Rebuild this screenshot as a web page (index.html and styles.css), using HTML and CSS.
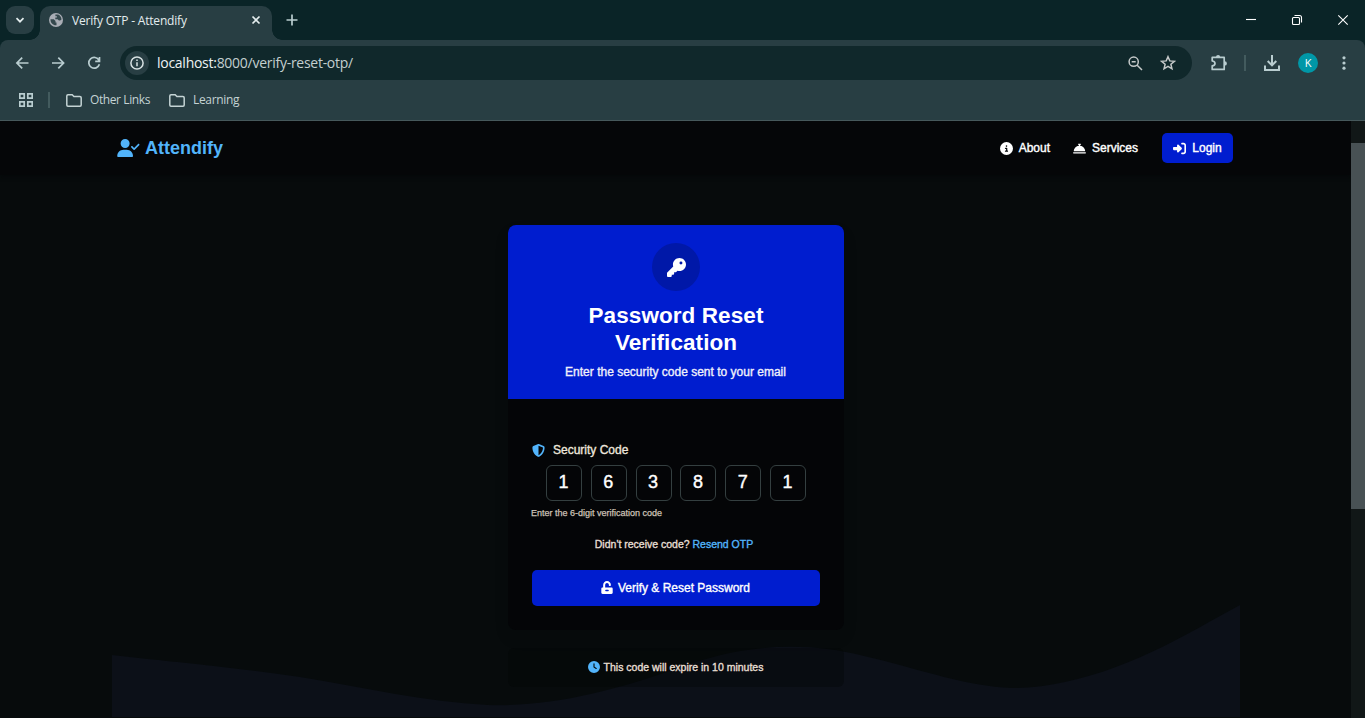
FILE: index.html
```html
<!DOCTYPE html>
<html lang="en">
<head>
<meta charset="utf-8">
<title>Verify OTP - Attendify</title>
<link rel="stylesheet" href="styles.css">
</head>
<body>
<header class="browser">
  <div class="tabstrip">
    <div class="tab-search"><svg width="10" height="10" viewBox="0 0 10 10" class="line bright"><path d="M1.500 3.200 5 6.700l3.500-3.500"/></svg></div>
    <div class="tab">
      <svg class="globe" width="14" height="14" viewBox="0 0 14 14"><circle cx="7" cy="7" r="7" fill="#a9adb5"/><path d="M1.500 6.200h3.300l1.700 1.700v1.600h1v2.700C4.300 12.600 1.300 10 1.500 6.200zM6.400 1.600h2.700c2 .9 3.300 2.700 3.400 4.900-.7 1-1.600 1.300-2.600 1L8.600 6.200H6.300V4.500h1.600V3.200H6.400z" fill="#34484d"/></svg>
      <span class="tab-title">Verify OTP - Attendify</span>
      <svg class="line bright tab-close" width="10" height="10" viewBox="0 0 10 10"><path d="M1.500 1.500l7 7M8.500 1.500l-7 7"/></svg>
    </div>
    <svg class="line new-tab" width="12" height="12" viewBox="0 0 12 12"><path d="M6 .5v11M.5 6h11"/></svg>
    <div class="window-controls">
      <svg width="46" height="40" viewBox="0 0 46 40"><path d="M18 19.500h10"/></svg>
      <svg width="46" height="40" viewBox="0 0 46 40"><rect x="18.500" y="17.500" width="7" height="7" rx="1"/><path d="M20.500 15.500h5a2 2 0 0 1 2 2v5"/></svg>
      <svg width="46" height="40" viewBox="0 0 46 40"><path d="M18.300 15.300l9.400 9.400M27.700 15.300l-9.400 9.400"/></svg>
    </div>
  </div>
  <div class="toolbar-back"><div class="toolbar">
    <div class="nav-buttons">
      <svg class="line" width="14" height="14" viewBox="0 0 14 14"><path d="M13.500 7H2M7.200 1.700 1.900 7l5.300 5.300"/></svg>
      <svg class="line" width="14" height="14" viewBox="0 0 14 14"><path d="M1 7h11.500M7.300 1.700 12.600 7l-5.300 5.300"/></svg>
      <svg class="line" width="14" height="14" viewBox="0 0 14 14"><path d="M12 4.300A5.400 5.400 0 1 0 12.400 8.300M12.500 1v4.300H8.200"/></svg>
    </div>
    <div class="omnibox">
      <span class="site-info"><svg width="14" height="14" viewBox="0 0 14 14"><circle cx="7" cy="7" r="6.100"/><path d="M7 6.300v4M7 3.500v1.400"/></svg></span>
      <span class="url"><b>localhost:</b>8000/verify-reset-otp/</span>
      <svg class="line omni-zoom" width="15" height="15" viewBox="0 0 15 15"><circle cx="5.700" cy="5.700" r="4.600"/><path d="M9.200 9.200l4.800 4.800M3.700 5.700h4"/></svg>
      <svg class="line omni-star" width="16" height="16" viewBox="0 0 16 16"><path d="M8 1.700l1.800 4.200 4.600.4-3.500 3 1.050 4.500L8 11.400l-3.950 2.400L5.100 9.300l-3.500-3 4.600-.4z"/></svg>
    </div>
    <div class="toolbar-actions">
      <svg width="18" height="18" viewBox="0 0 18 18" class="line ext"><path d="M2.200 3.400h12v12h-12v-3.600c2-.2 2.800-1 2.800-2.400S4.200 7.200 2.200 7z" stroke-linejoin="round"/><path class="solid" d="M6 3a2.100 2.100 0 0 1 4.200 0zM14.700 7.200a2.200 2.200 0 0 1 0 4.400z"/></svg>
      <i class="divider"></i>
      <svg width="16" height="16" viewBox="0 0 16 16" class="line download"><path d="M8 0v10M3.700 6 8 10.300 12.300 6M1 10.500V15h14v-4.500"/></svg>
      <span class="avatar">K</span>
      <svg width="4" height="14" viewBox="0 0 4 14" class="menu"><circle cx="2" cy="1.800" r="1.600"/><circle cx="2" cy="7" r="1.600"/><circle cx="2" cy="12.200" r="1.600"/></svg>
    </div>
  </div></div>
  <div class="bookmarks">
    <svg width="14" height="14" viewBox="0 0 14 14" class="line apps"><path d="M.8.8h4.400v4.400H.8zM8.800.8h4.400v4.400H8.800zM.8 8.800h4.400v4.400H.8zM8.800 8.800h4.400v4.400H8.800z"/></svg>
    <i class="divider"></i>
    <span class="bookmark"><svg width="16" height="13" viewBox="0 0 16 13" class="line folder"><path d="M.8 2Q.8.800 2 .8h4.200l1.700 1.700h6Q15.200 2.500 15.200 3.700V11Q15.200 12.200 14 12.200H2Q.8 12.200.8 11z"/></svg><span class="bm-other">Other Links</span></span>
    <span class="bookmark"><svg width="16" height="13" viewBox="0 0 16 13" class="line folder"><path d="M.8 2Q.8.800 2 .8h4.200l1.700 1.700h6Q15.200 2.500 15.200 3.700V11Q15.200 12.200 14 12.200H2Q.8 12.200.8 11z"/></svg><span class="bm-learning">Learning</span></span>
  </div>
</header>
<div class="viewport">
  <div class="page">
    <nav class="navbar">
      <a class="brand"><svg width="23" height="18" viewBox="0 0 640 512"><path d="M96 128a128 128 0 1 1 256 0A128 128 0 1 1 96 128zM0 482.300C0 383.800 79.800 304 178.300 304h91.400C368.200 304 448 383.800 448 482.300c0 16.400-13.300 29.700-29.700 29.700H29.700C13.300 512 0 498.700 0 482.300zM625 177L497 305c-9.400 9.400-24.600 9.400-33.900 0l-64-64c-9.400-9.400-9.400-24.600 0-33.900s24.600-9.400 33.900 0l47 47L591 143c9.400-9.400 24.600-9.400 33.900 0s9.400 24.600 0 33.900z"/></svg><span>Attendify</span></a>
      <a class="nav-link about"><svg width="13" height="13" viewBox="0 0 512 512"><path d="M256 512A256 256 0 1 0 256 0a256 256 0 1 0 0 512zM216 336h24V272H216c-13.300 0-24-10.700-24-24s10.700-24 24-24h48c13.300 0 24 10.700 24 24v88h8c13.300 0 24 10.700 24 24s-10.700 24-24 24H216c-13.300 0-24-10.700-24-24s10.700-24 24-24zm40-208a32 32 0 1 1 0 64 32 32 0 1 1 0-64z"/></svg><span>About</span></a>
      <a class="nav-link services"><svg width="13" height="13" viewBox="0 0 512 512"><path d="M216 64c-13.300 0-24 10.700-24 24s10.700 24 24 24h16v33.300C119.600 157.200 32 252.400 32 368H480c0-115.600-87.600-210.800-200-222.700V112h16c13.300 0 24-10.700 24-24s-10.700-24-24-24H216zM24 400c-13.300 0-24 10.700-24 24s10.700 24 24 24H488c13.300 0 24-10.700 24-24s-10.700-24-24-24H24z"/></svg><span>Services</span></a>
      <a class="login"><svg width="13" height="13" viewBox="0 0 512 512"><path d="M217.900 105.900L340.700 228.700c7.200 7.200 11.300 17.100 11.300 27.300s-4.100 20.100-11.300 27.300L217.900 406.100c-6.400 6.400-15 9.900-24 9.900c-18.700 0-33.900-15.200-33.900-33.900V320H32c-17.700 0-32-14.300-32-32v-64c0-17.700 14.300-32 32-32h128v-62.100c0-18.700 15.200-33.900 33.900-33.900c9 0 17.600 3.600 24 9.900zM352 416h64c17.700 0 32-14.300 32-32V128c0-17.700-14.300-32-32-32h-64c-17.700 0-32-14.300-32-32s14.300-32 32-32h64c53 0 96 43 96 96v256c0 53-43 96-96 96h-64c-17.700 0-32-14.300-32-32s14.300-32 32-32z"/></svg><span>Login</span></a>
    </nav>
    <svg class="wave" width="1128" height="112" viewBox="112 605 1128 112"><path d="M112 655L143 658.600C175 662 238 668 300 677C363 687 425 702 488 705C550 707 613 691 676 669C739 645 801 640 864 656C927 671 965 686 1012 688C1080 688 1150 656 1209 622L1240 605V717H112Z"/></svg>
    <main class="content">
      <section class="card">
        <header class="card-header">
          <span class="key"><svg width="19" height="19" viewBox="0 0 512 512"><path d="M336 352c97.200 0 176-78.800 176-176S433.200 0 336 0S160 78.800 160 176c0 18.700 2.900 36.800 8.300 53.700L7 391c-4.500 4.500-7 10.600-7 17v80c0 13.300 10.700 24 24 24h80c13.300 0 24-10.700 24-24V448h40c13.300 0 24-10.700 24-24V384h40c6.400 0 12.500-2.500 17-7l33.300-33.300c16.900 5.400 35 8.300 53.700 8.300zM376 96a40 40 0 1 1 0 80 40 40 0 1 1 0-80z"/></svg></span>
          <h1>Password Reset<br>Verification</h1>
          <p>Enter the security code sent to your email</p>
        </header>
        <div class="card-body">
          <label class="code-label"><svg width="13" height="13" viewBox="0 0 512 512"><path d="M256 0c4.600 0 9.200 1 13.400 2.900L457.700 82.800c22 9.300 38.400 31 38.300 57.200c-.5 99.200-41.300 280.700-213.600 363.200c-16.700 8-36.100 8-52.800 0C57.300 420.700 16.500 239.200 16 140c-.1-26.200 16.300-47.900 38.300-57.200L242.700 2.900C246.800 1 251.400 0 256 0zm0 66.800V444.800C394 378 431.100 230.100 432 141.400L256 66.800z"/></svg><span>Security Code</span></label>
          <div class="digits"><span>1</span><span>6</span><span>3</span><span>8</span><span>7</span><span>1</span></div>
          <p class="hint"><span>Enter the 6-digit verification code</span></p>
          <p class="resend"><span>Didn't receive code? <a>Resend OTP</a></span></p>
          <button class="submit"><svg width="12" height="13" viewBox="0 0 448 512"><path fill-rule="evenodd" d="M400 256H152V152.900c0-39.600 31.700-72.500 71.300-72.900 40-.4 72.700 32.100 72.700 72v16c0 13.300 10.700 24 24 24h32c13.300 0 24-10.700 24-24v-16C376 68 307.500-.3 223.500 0 139.500.3 72 69.500 72 153.500V256H48c-26.500 0-48 21.500-48 48v160c0 26.500 21.500 48 48 48h352c26.500 0 48-21.500 48-48V304c0-26.500-21.500-48-48-48zM184 344h80a32 32 0 0 1 0 64h-80a32 32 0 0 1 0-64z"/></svg><span>Verify &amp; Reset Password</span></button>
        </div>
      </section>
      <div class="expiry"><svg width="12" height="12" viewBox="0 0 512 512"><path d="M256 0a256 256 0 1 1 0 512A256 256 0 1 1 256 0zM232 120V256c0 8 4 15.500 10.700 20l96 64c11 7.400 25.900 4.400 33.300-6.700s4.400-25.900-6.700-33.300L280 243.200V120c0-13.300-10.700-24-24-24s-24 10.700-24 24z"/></svg><span>This code will expire in 10 minutes</span></div>
    </main>
  </div>
  <div class="scrollbar"><div class="thumb"></div></div>
</div>
</body>
</html>
```
FILE: styles.css
```css
* { box-sizing: border-box; }
body { margin: 0; width: 1365px; height: 718px; overflow: hidden; background: #070b0c; font-family: "Liberation Sans", Arial, sans-serif; color: #fff; }
svg { display: block; flex: none; }
p, h1 { margin: 0; }
span { white-space: nowrap; }

/* Browser frame */
.browser { height: 121px; background: #283e43; border-bottom: 1px solid #46585b; font-family: "Open Sans", "Noto Sans", sans-serif; }
.line { fill: none; stroke: #b9cdd0; stroke-width: 1.7; }
.line.bright { stroke: #e4edee; }
.tabstrip { height: 40px; display: flex; align-items: center; background: #0a2427; padding-left: 6px; }
.tab-search { width: 28px; height: 28px; border-radius: 9px; background: #283e43; display: grid; place-items: center; }
.tab { position: relative; width: 232px; height: 34px; margin: 6px 0 0 6px; padding: 0 11px 5px 9px; border-radius: 10px 10px 0 0; background: #283e43; display: flex; align-items: center; }
.tab::before, .tab::after { content: ""; position: absolute; bottom: 0; width: 10px; height: 10px; }
.tab::before { left: -10px; background: radial-gradient(circle at 0 0, transparent 9.5px, #283e43 10px); }
.tab::after { right: -10px; background: radial-gradient(circle at 100% 0, transparent 9.5px, #283e43 10px); }
.tab-title { margin-left: 9px; font-size: 12px; letter-spacing: -0.19px; color: #e4edee; }
.tab-close { margin-left: auto; }
.globe { margin-top: -1px; }
.tab-close { margin-top: -1px; }
.new-tab { margin-left: 14px; }
.window-controls { display: flex; margin-left: auto; margin-right: -1px; }
.window-controls svg { fill: none; stroke: #fff; stroke-width: 1.1; }
.toolbar-back { background: #0a2427; }
.toolbar { height: 46px; display: flex; align-items: center; padding-left: 15px; border-radius: 8px 8px 0 0; background: #283e43; }
.nav-buttons { display: flex; gap: 22px; }
.omnibox { width: 1072px; height: 34px; margin-left: 19px; padding: 0 16px 0 5px; border-radius: 17px; background: #10282b; display: flex; align-items: center; }
.site-info { width: 24px; height: 24px; border-radius: 50%; background: #283e43; display: grid; place-items: center; }
.site-info svg { fill: none; stroke: #d8e2e3; stroke-width: 1.5; }
.url { margin-left: 8px; padding-bottom: 2px; font-size: 14px; letter-spacing: -0.27px; color: #c3cfcf; }
.url b { font-weight: 400; color: #edf3f3; }
.omni-zoom, .omni-star { stroke: #c5c9c9; stroke-width: 1.5; }
.omni-zoom { margin-left: auto; }
.omni-star { margin-left: 17px; }
.toolbar-actions { display: flex; align-items: center; margin-left: 18px; }
.solid { fill: #b9cdd0; stroke: none; }
.divider { width: 2px; height: 16px; background: #435b5e; }
.toolbar-actions .divider { margin-left: 16px; }
.download { margin-left: 18px; stroke-width: 2; }
.avatar { width: 20px; height: 20px; margin-left: 18px; border-radius: 50%; background: #0097a7; display: grid; place-items: center; font-size: 11px; line-height: 20px; }
.menu { margin-left: 24px; fill: #b9cdd0; }
.bookmarks { height: 34px; display: flex; align-items: center; padding: 0 0 6px 19px; }
.bookmarks .divider { margin: 0 16px 0 15px; }
.bookmark { display: flex; align-items: center; gap: 8px; margin-right: 19px; font-size: 12px; color: #c4d3d4; }
.bookmark span { padding-bottom: 1px; }
.folder { stroke: #c4d3d4; stroke-width: 1.5; }
.bm-other { letter-spacing: -0.4px; }
.bm-learning { letter-spacing: -0.35px; }

/* Page */
.viewport { height: 597px; display: flex; }
.page { position: relative; width: 1351px; overflow: hidden; }
.navbar { height: 54px; padding: 0 118px 0 117px; display: flex; align-items: center; background: #050608; box-shadow: 0 1px 4px #050709; }
.navbar svg, .card-header svg, .submit svg { fill: currentColor; }
.brand { display: flex; align-items: center; gap: 5px; margin-right: auto; color: #52b4fb; font-size: 18px; font-weight: 700; }
.nav-link, .login { display: flex; align-items: center; gap: 6px; font-size: 12px; -webkit-text-stroke: 0.4px currentColor; }
.nav-link { padding-bottom: 1px; margin-right: 23px; }
.services { margin-right: 24px; }
.nav-link svg, .login svg { margin-top: 1px; }
.login { width: 71px; height: 30px; justify-content: center; border-radius: 5px; background: #001dcf; }
.wave { position: absolute; left: 112px; bottom: 1px; fill: #0c1018; }
.content { position: relative; width: 336px; margin: 50px 0 0 508px; }
.card { height: 405px; border-radius: 8px; background: #040507; overflow: hidden; box-shadow: 0 8px 16px rgba(0, 0, 0, .08); }
.card-header { height: 174px; padding-top: 18px; background: #001dcf; text-align: center; }
.key { width: 48px; height: 48px; margin: 0 auto; border-radius: 50%; background: #0018a8; display: grid; place-items: center; }
h1 { margin-top: 11px; font-size: 22.5px; line-height: 27px; letter-spacing: 0.08px; }
.card-header p { margin-top: 7px; font-size: 12px; line-height: 18px; color: #f0f0fb; padding-right: 1px; -webkit-text-stroke: 0.35px currentColor; }
.card-body { padding: 42px 24px 24px; }
.code-label { display: flex; align-items: center; gap: 8px; height: 18px; font-size: 12px; color: #ede6dc; -webkit-text-stroke: 0.35px currentColor; }
.code-label svg, .expiry svg { fill: #52b4fb; }
.digits { display: flex; justify-content: space-between; width: 260px; margin: 6px 0 0 14px; }
.digits span { width: 36px; height: 36px; padding-right: 1px; border: 1px solid #343f40; border-radius: 6px; font-size: 18px; line-height: 33px; text-align: center; -webkit-text-stroke: 0.4px currentColor; }
.hint { margin: 5px 0 0 -1px; font-size: 9px; line-height: 14px; color: #cdc2b6; -webkit-text-stroke: 0.25px currentColor; }
.resend { margin-top: 15px; padding-right: 4px; font-size: 10.5px; line-height: 18px; text-align: center; color: #e6ded2; -webkit-text-stroke: 0.35px currentColor; }
.resend a { color: #52b4fb; }
.submit { width: 288px; height: 36px; margin-top: 17px; padding: 0 1px 1px 0; border: 0; border-radius: 5px; background: #001dcf; color: #fff; display: flex; justify-content: center; align-items: center; gap: 5px; font: 12px "Liberation Sans", Arial, sans-serif; -webkit-text-stroke: 0.35px currentColor; }
.expiry { height: 39px; margin-top: 18px; padding: 0 1px 1px 0; border-radius: 6px; background: rgba(4, 5, 7, .35); display: flex; justify-content: center; align-items: center; gap: 4px; font-size: 10.5px; color: #e6ded2; -webkit-text-stroke: 0.35px currentColor; }
.scrollbar { width: 14px; padding-top: 22px; background: #111717; }
.thumb { height: 366px; background: #485154; }
```
